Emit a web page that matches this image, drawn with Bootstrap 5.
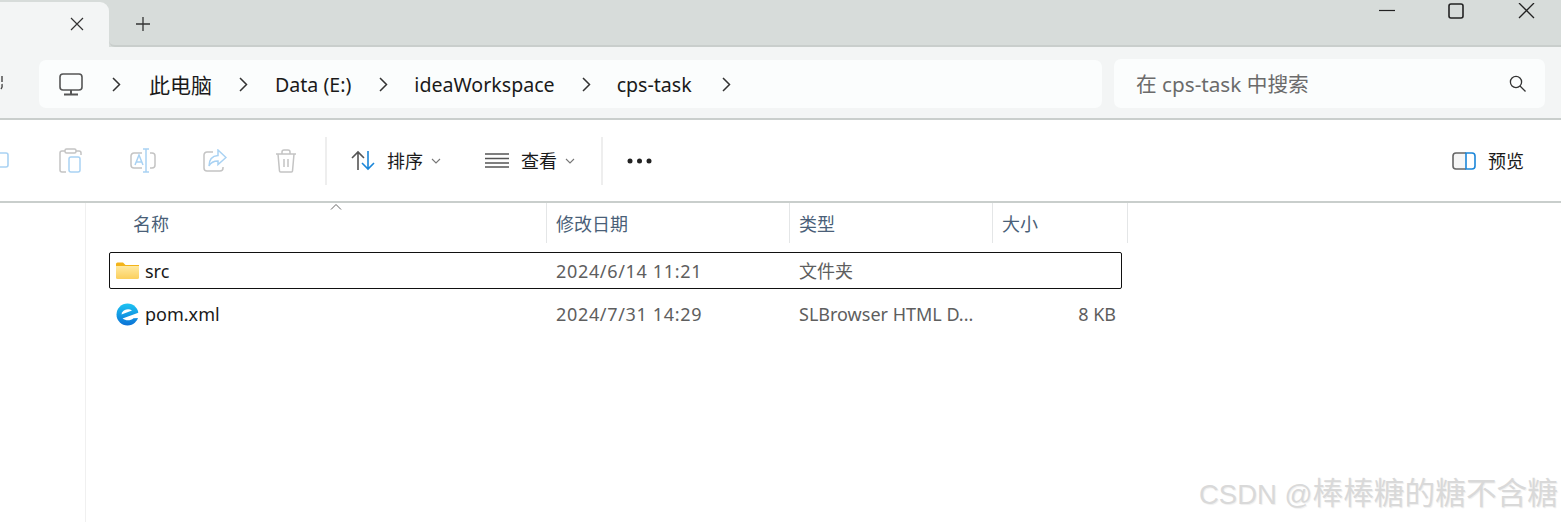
<!DOCTYPE html>
<html lang="zh-CN">
<head>
  <meta charset="UTF-8" />
  <meta name="viewport" content="width=device-width, initial-scale=1" />
  <title>cps-task</title>
  <link href="https://cdn.jsdelivr.net/npm/bootstrap@5.3.3/dist/css/bootstrap.min.css" rel="stylesheet">
  <style>
    html, body { height: 100%; }
    body {
      width: 1561px;
      height: 522px;
      overflow: hidden;
      background: #fff;
      color: #1a1a1a;
      font-family: "Noto Sans", "Noto Sans CJK SC", sans-serif;
      font-size: 18px;
      line-height: 1;
    }
    svg { display: block; flex: none; }

    /* title bar */
    .tab-strip { height: 47px; background: #d7dcda; }
    .active-tab {
      width: 109px; height: 45px; margin-top: 2px;
      background: #f3f5f5; border-top-right-radius: 9px;
      padding-left: 69px; padding-top: 14px;
    }
    .strip-rest { border-bottom: 2px solid #c9cecc; border-bottom-left-radius: 6px; }
    .new-tab { margin: 16px 0 0 26px; }
    .win-btns { padding: 3px 26px 0 0; gap: 53px; }

    /* address row */
    .addr-row { height: 73px; background: #f3f5f5; border-bottom: 2px solid #c9cecc; padding: 13px 16px 0 0; }
    .refresh-cut { width: 39px; overflow: hidden; padding-top: 14px; }
    .addr-box { width: 1063px; height: 48px; background: #fbfdfd; border-radius: 7px; padding-left: 20px; font-size: 19.6px; }
    .addr-box .seg { white-space: nowrap; padding-top: 2px; }
    .addr-box .seg-zh { font-size: 21px; }
    .search-box { width: 431px; height: 49px; margin-left: 12px; margin-top: -1px; background: #fbfdfd; border-radius: 7px; padding: 0 19px 0 22px; color: #6b6b6b; font-size: 20.7px; }
    .search-box span { padding-top: 2px; }

    /* command bar */
    .cmd-bar { height: 83px; border-bottom: 2px solid #c9cecc; padding-right: 37px; }
    .cmd-sep { width: 2px; height: 48px; background: #eeeeee; }
    .cmd-arrow { margin-left: 8px; }

    /* file list */
    .file-pane { margin-left: 85px; height: 319px; border-left: 1px solid #f0f0f0; position: relative; }
    .col-head { height: 40px; color: #4a5f78; }
    .col-head > div { height: 40px; border-right: 1px solid #e4e6e7; padding: 2px 0 0 9px; display: flex; align-items: center; }
    .w-name { width: 461px; }
    .w-date { width: 243px; }
    .w-kind { width: 203px; }
    .w-size { width: 135px; }
    .col-head .w-name { padding-left: 47px; position: relative; }
    .sort-mark { position: absolute; left: 244px; top: 1px; }
    .file-row { width: 1013px; margin-left: 23px; height: 37px; border: 1.5px solid transparent; border-radius: 2px; color: #5e5e5e; }
    .file-row.picked { border-color: #111; margin-top: 9px; }
    .file-row + .file-row { margin-top: 6px; height: 38px; }
    .file-row .n { width: 446px; padding-left: 6px; color: #1a1a1a; gap: 6px; }
    .file-row .d { width: 243px; letter-spacing: .67px; }
    .file-row .k { width: 202px; }
    .file-row .s { width: 115px; text-align: right; }

    .watermark {
      position: absolute; right: 3px; bottom: 12px;
      font-family: "Liberation Sans", "Noto Sans CJK SC", sans-serif;
      font-size: 27.5px; color: #d9d9d9; white-space: nowrap;
      text-shadow: 1px 1px 1px #efefef;
    }
    .watermark span { font-size: 30.7px; }
  </style>
</head>
<body>
  <div class="d-flex tab-strip">
    <div class="active-tab">
      <svg width="16" height="16" viewBox="0 0 16 16" fill="none" stroke="#333" stroke-width="1.2"><path d="M2 2 14 14M14 2 2 14"/></svg>
    </div>
    <div class="flex-grow-1 d-flex justify-content-between strip-rest">
      <div class="new-tab">
        <svg width="16" height="16" viewBox="0 0 16 16" fill="none" stroke="#333" stroke-width="1.3"><path d="M8 1v14M1 8h14"/></svg>
      </div>
      <div class="d-flex win-btns">
        <svg width="16" height="18" viewBox="0 0 16 18" fill="none" stroke="#222" stroke-width="1.2"><path d="M0 7.5h16"/></svg>
        <svg width="16" height="18" viewBox="0 0 16 18" fill="none" stroke="#222" stroke-width="1.6"><rect x="1" y="1" width="14" height="14" rx="2"/></svg>
        <svg width="18" height="18" viewBox="0 0 18 18" fill="none" stroke="#222" stroke-width="1.3"><path d="M2 0 17 15M17 0 2 15"/></svg>
      </div>
    </div>
  </div>

  <div class="d-flex addr-row">
    <div class="refresh-cut">
      <svg width="14" height="20" viewBox="0 0 14 20" fill="none" stroke="#444" stroke-width="1.4" style="margin-left:-10px"><path d="M12 2v6M11 15a6 6 0 0 0 1-5"/></svg>
    </div>
    <div class="d-flex align-items-center addr-box">
      <svg width="24" height="23" viewBox="0 0 24 23" fill="none" stroke="#555" stroke-width="1.6"><rect x="1" y="1" width="22" height="16" rx="3"/><path d="M12 17v4M5 21.5h14" stroke-width="2"/></svg>
      <svg style="margin-left:29px" width="9" height="15" viewBox="0 0 9 15" fill="none" stroke="#333" stroke-width="1.5"><path d="M1 1l6.500 6.500L1 14"/></svg>
      <span class="seg seg-zh" style="margin-left:28px">此电脑</span>
      <svg style="margin-left:27px" width="9" height="15" viewBox="0 0 9 15" fill="none" stroke="#333" stroke-width="1.5"><path d="M1 1l6.500 6.500L1 14"/></svg>
      <span class="seg" style="margin-left:27px">Data (E:)</span>
      <svg style="margin-left:28px" width="9" height="15" viewBox="0 0 9 15" fill="none" stroke="#333" stroke-width="1.5"><path d="M1 1l6.500 6.500L1 14"/></svg>
      <span class="seg" style="margin-left:26px">ideaWorkspace</span>
      <svg style="margin-left:27px" width="9" height="15" viewBox="0 0 9 15" fill="none" stroke="#333" stroke-width="1.5"><path d="M1 1l6.500 6.500L1 14"/></svg>
      <span class="seg" style="margin-left:26px">cps-task</span>
      <svg style="margin-left:30px" width="9" height="15" viewBox="0 0 9 15" fill="none" stroke="#333" stroke-width="1.5"><path d="M1 1l6.500 6.500L1 14"/></svg>
    </div>
    <div class="d-flex align-items-center justify-content-between search-box">
      <span>在 cps-task 中搜索</span>
      <svg width="17" height="17" viewBox="0 0 17 17" fill="none" stroke="#333" stroke-width="1.3"><circle cx="7" cy="7" r="5.600"/><path d="M11 11l5.500 5.500"/></svg>
    </div>
  </div>

  <div class="d-flex align-items-center cmd-bar">
    <svg style="margin-left:-12px" width="22" height="24" viewBox="0 0 22 24" fill="none" stroke-width="1.6"><path d="M6 4h12a2 2 0 0 1 2 2v10a2 2 0 0 1-2 2H6z" stroke="#a9d2f3"/><path d="M3 20H1" stroke="#c8c8c8"/></svg>
    <svg style="margin-left:49px" width="24" height="25" viewBox="0 0 24 25" fill="none" stroke-width="1.5"><path d="M6 3H3a2 2 0 0 0-2 2v17a2 2 0 0 0 2 2h4M17 3h3a2 2 0 0 1 2 2v2" stroke="#c4c4c4"/><rect x="6" y="1" width="11" height="4" rx="1.500" stroke="#c4c4c4"/><rect x="10" y="9" width="11" height="15" rx="2" stroke="#a9d2f3"/></svg>
    <svg style="margin-left:47px" width="26" height="25" viewBox="0 0 26 25" fill="none" stroke-width="1.5"><path d="M12 5H4a3 3 0 0 0-3 3v9a3 3 0 0 0 3 3h8M20 5h2a3 3 0 0 1 3 3v9a3 3 0 0 1-3 3h-2" stroke="#c4c4c4"/><path d="M13 1h6M16 1v23M13 24h6M5 17l4-10 4 10M6.500 14h5" stroke="#a9d2f3"/></svg>
    <svg style="margin-left:47px" width="24" height="23" viewBox="0 0 24 23" fill="none" stroke-width="1.5"><path d="M10 3H4a3 3 0 0 0-3 3v13a3 3 0 0 0 3 3h13a3 3 0 0 0 3-3v-1" stroke="#c4c4c4"/><path d="M15 1l8 7.500-8 7V12c-4 0-7 1-9 5 0-6 3-10 9-10.500z" stroke="#a9d2f3"/></svg>
    <svg style="margin-left:48px" width="22" height="24" viewBox="0 0 22 24" fill="none" stroke="#c4c4c4" stroke-width="1.5"><path d="M1 5h20M7 5V3a2 2 0 0 1 2-2h4a2 2 0 0 1 2 2v2M3 5l1.500 17a1.500 1.500 0 0 0 1.500 1h10a1.500 1.500 0 0 0 1.500-1L19 5M9 10v8M13 10v8"/></svg>
    <div class="cmd-sep" style="margin-left:28px"></div>
    <svg style="margin-left:24px" width="25" height="21" viewBox="0 0 25 21" fill="none" stroke-width="1.6"><path d="M7 20V2M1 8l6-6 6 6" stroke="#555"/><path d="M17 1v18M11 13l6 6 6-6" stroke="#1b86d9"/></svg>
    <span style="margin-left:11px">排序</span>
    <svg class="cmd-arrow" width="10" height="6" viewBox="0 0 10 6" fill="none" stroke="#777" stroke-width="1.1"><path d="M1 1l4 4 4-4"/></svg>
    <svg style="margin-left:44px" width="24" height="15" viewBox="0 0 24 15" fill="none" stroke="#555" stroke-width="1.4"><path d="M0 1h24M0 5.500h24M0 10h24M0 14h24"/></svg>
    <span style="margin-left:12px">查看</span>
    <svg class="cmd-arrow" width="10" height="6" viewBox="0 0 10 6" fill="none" stroke="#777" stroke-width="1.1"><path d="M1 1l4 4 4-4"/></svg>
    <div class="cmd-sep" style="margin-left:26px"></div>
    <svg style="margin-left:24px" width="25" height="6" viewBox="0 0 25 6" fill="#222"><circle cx="3" cy="3" r="2.500"/><circle cx="12.500" cy="3" r="2.500"/><circle cx="22" cy="3" r="2.500"/></svg>
    <svg class="ms-auto" width="24" height="18" viewBox="0 0 24 18" fill="none" stroke-width="1.6"><path d="M14 1H4a3 3 0 0 0-3 3v10a3 3 0 0 0 3 3h10" fill="#f6f6f6" stroke="#666"/><path d="M14 1h6a3 3 0 0 1 3 3v10a3 3 0 0 1-3 3h-6z" stroke="#1b86d9"/></svg>
    <span style="margin-left:12px">预览</span>
  </div>

  <div class="file-pane">
    <div class="d-flex col-head">
      <div class="w-name">名称
        <svg class="sort-mark" width="12" height="6" viewBox="0 0 12 6" fill="none" stroke="#666" stroke-width="1"><path d="M1 5.500l5-5 5 5"/></svg>
      </div>
      <div class="w-date">修改日期</div>
      <div class="w-kind">类型</div>
      <div class="w-size">大小</div>
    </div>

    <div class="d-flex align-items-center file-row picked">
      <div class="d-flex align-items-center n">
        <svg width="23" height="17" viewBox="0 0 23 17">
          <defs><linearGradient id="fold" x1="0" y1="0" x2="0" y2="1"><stop offset="0" stop-color="#ffe9a0"/><stop offset="1" stop-color="#fbcf5c"/></linearGradient></defs>
          <path d="M0 2a1.500 1.500 0 0 1 1.500-1.500H7L9.500 3H23v2H0z" fill="#f3b319"/>
          <path d="M0 4h23v11.500a1.500 1.500 0 0 1-1.500 1.500h-20A1.500 1.500 0 0 1 0 15.500z" fill="url(#fold)"/>
        </svg>
        <span>src</span>
      </div>
      <div class="d">2024/6/14 11:21</div>
      <div class="k">文件夹</div>
    </div>
    <div class="d-flex align-items-center file-row">
      <div class="d-flex align-items-center n">
        <svg width="23" height="23" viewBox="0 0 23 23">
          <defs><linearGradient id="orb" x1="0" y1="0" x2="0" y2="1"><stop offset="0" stop-color="#1dc4f2"/><stop offset="1" stop-color="#0b72d6"/></linearGradient></defs>
          <circle cx="11.500" cy="11.500" r="11" fill="url(#orb)"/>
          <path d="M6 9.500c2.500-3.500 7-4 10-2L5.500 11.500z" fill="#fff"/>
          <path d="M6.500 15.500 23 9.500v5.500l-5.500.2c-3 2.600-7.500 2.800-11 .3z" fill="#fff"/>
        </svg>
        <span>pom.xml</span>
      </div>
      <div class="d">2024/7/31 14:29</div>
      <div class="k">SLBrowser HTML D...</div>
      <div class="s">8 KB</div>
    </div>
  </div>

  <div class="watermark">CSDN @<span>棒棒糖的糖不含糖</span></div>
  <script src="https://cdn.jsdelivr.net/npm/bootstrap@5.3.3/dist/js/bootstrap.bundle.min.js"></script>
</body>
</html>
